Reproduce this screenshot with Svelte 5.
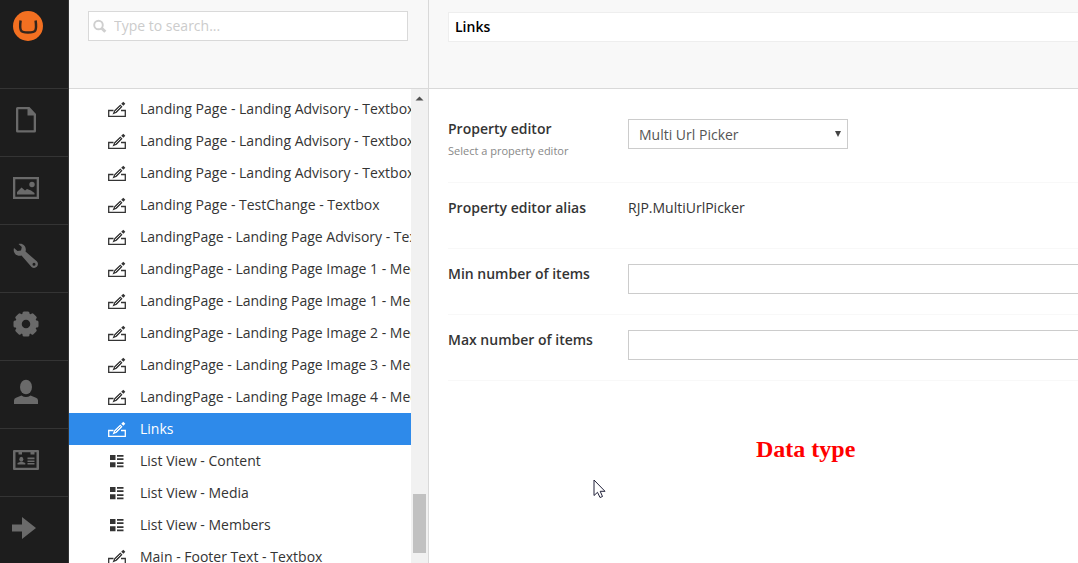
<script>
  let search = $state("");
  let name = $state("Links");
  let editor = $state("Multi Url Picker");
  let minItems = $state("");
  let maxItems = $state("");
  let selected = $state(10);

  const sections = [
    { label: "Content", icon: "document" },
    { label: "Media", icon: "picture" },
    { label: "Settings", icon: "wrench" },
    { label: "Developer", icon: "gear" },
    { label: "Users", icon: "user" },
    { label: "Members", icon: "card" },
    { label: "Help", icon: "arrow" },
  ];

  const dataTypes = [
    { name: "Landing Page - Landing Advisory - Textbox", icon: "edit" },
    { name: "Landing Page - Landing Advisory - Textbox", icon: "edit" },
    { name: "Landing Page - Landing Advisory - Textbox", icon: "edit" },
    { name: "Landing Page - TestChange - Textbox", icon: "edit" },
    { name: "LandingPage - Landing Page Advisory - Textbox", icon: "edit" },
    { name: "LandingPage - Landing Page Image 1 - Media", icon: "edit" },
    { name: "LandingPage - Landing Page Image 1 - Media", icon: "edit" },
    { name: "LandingPage - Landing Page Image 2 - Media", icon: "edit" },
    { name: "LandingPage - Landing Page Image 3 - Media", icon: "edit" },
    { name: "LandingPage - Landing Page Image 4 - Media", icon: "edit" },
    { name: "Links", icon: "edit" },
    { name: "List View - Content", icon: "list" },
    { name: "List View - Media", icon: "list" },
    { name: "List View - Members", icon: "list" },
    { name: "Main - Footer Text - Textbox", icon: "edit" },
  ];
</script>

<div class="shell">
  <nav class="sections" aria-label="Sections">
    <a class="brand" href="#/" aria-label="Home">
      <svg width="30" height="30" viewBox="0 0 30 30">
        <circle cx="15" cy="15" r="15" fill="#f37021" />
        <path
          d="M7.600 9.500 C7 14 7.200 18 8 19.500 C9 21.300 12 21.500 15 21.500 C18 21.500 21.300 21.300 22.300 19.500 C23.100 18 23.200 14 22.600 9.500"
          fill="none"
          stroke="#33251c"
          stroke-width="2.500"
        />
      </svg>
    </a>
    {#each sections as section}
      <a class="section" href="#/{section.icon}" aria-label={section.label}>
        <svg width="28" height="28" viewBox="0 0 28 28" fill="currentColor">
          {#if section.icon === "document"}
            <path
              fill-rule="evenodd"
              d="M5.500 1 H17.500 L24 8 V25 Q24 26.500 22.500 26.500 H5.500 Q4 26.500 4 25 V2.500 Q4 1 5.500 1 Z M6.300 3.300 V24.200 H21.700 V9.500 H15.500 V3.300 Z"
            />
          {:else if section.icon === "picture"}
            <path
              fill-rule="evenodd"
              d="M1 3 H27 V25 H1 Z M3.300 5.300 V22.700 H24.700 V5.300 Z"
            />
            <circle cx="20" cy="10.500" r="2.700" />
            <path d="M5 20.500 V18 L9.500 13.500 L13 16.500 L15 15 L19 16.500 L22.500 19 V20.500 Z" />
          {:else if section.icon === "wrench"}
            <path
              fill-rule="evenodd"
              d="M6.500 2 C11 0.500 15 5 13.500 9.500 L25 19.500 C28 23 23.500 28 19.500 25 L9.500 13.500 C5 15 0.500 11 2 6 L5.500 9 L9 8.500 L9.800 5 Z M22 20.700 A1.500 1.500 0 1 0 22 23.700 A1.500 1.500 0 1 0 22 20.700 Z"
            />
          {:else if section.icon === "gear"}
            <circle cx="14" cy="14" r="7.500" fill="none" stroke="currentColor" stroke-width="6.500" />
            {#each [0, 45, 90, 135] as angle}
              <rect x="10.500" y="1.500" width="7" height="4" rx="1.500" transform="rotate({angle} 14 14)" />
              <rect x="10.500" y="22.500" width="7" height="4" rx="1.500" transform="rotate({angle} 14 14)" />
            {/each}
          {:else if section.icon === "user"}
            <ellipse cx="14" cy="9" rx="6" ry="7.300" />
            <path d="M2 26 V22.500 Q2 20.500 4 19.700 L9.500 17.500 Q14 20.500 18.500 17.500 L24 19.700 Q26 20.500 26 22.500 V26 Z" />
          {:else if section.icon === "card"}
            <path
              fill-rule="evenodd"
              d="M2 4 H26 Q27 4 27 5 V23 Q27 24 26 24 H2 Q1 24 1 23 V5 Q1 4 2 4 Z M3.500 6.300 V21.700 H24.500 V6.300 H22.500 V8.500 H18.500 V6.300 H10 V8.500 H6.500 V6.300 Z"
            />
            <ellipse cx="9.300" cy="13.200" rx="2" ry="2.500" />
            <path d="M5.500 18.500 V17 L8 16 H10.800 L13.300 17 V18.500 Z M15.500 11.500 H22.500 V13.200 H15.500 Z M15.500 14.500 H22.500 V16 H15.500 Z M15.500 17 H22.500 V18.500 H15.500 Z" />
          {:else}
            <path d="M0 10.500 H10 V3 L24 14 L10 25 V17.500 H0 Z" />
          {/if}
        </svg>
      </a>
    {/each}
  </nav>

  <aside class="tree-panel">
    <div class="panel-header">
      <label class="search">
        <svg width="14" height="14" viewBox="0 0 14 14" fill="none" stroke="#cfcfcf">
          <circle cx="5.500" cy="6" r="4.300" stroke-width="1.900" />
          <path d="M8.500 9 L12.300 12.800" stroke-width="3" />
        </svg>
        <input type="text" placeholder="Type to search..." aria-label="Search" bind:value={search} />
      </label>
    </div>
    <div class="tree-body">
      <ul class="tree">
        {#each dataTypes as item, i}
          <li>
            <a href="#/datatype/{i}" class:selected={selected === i} onclick={() => (selected = i)}>
              <svg width="18" height="18" viewBox="0 0 18 18">
                {#if item.icon === "edit"}
                  <path
                    d="M5.500 10.500 H0.700 V16.300 H17.300 V10.500 H13"
                    fill="none"
                    stroke="currentColor"
                    stroke-width="1.300"
                  />
                  <path
                    d="M4.500 14.500 L6.300 10.300 L12.300 4.500 L14.500 6.700 L8.700 12.700 Z M13.200 3.700 L15.300 1.800 L17.300 3.800 L15.400 5.800 Z"
                    fill="currentColor"
                  />
                  <path class="nib" d="M7 11.900 L12.600 6.400" fill="none" stroke-width="0.900" />
                {:else}
                  <path
                    d="M2 3 H7.500 V8 H2 Z M9 3 H15.500 V4.800 H9 Z M9 6.200 H15.500 V8 H9 Z M2 10.300 H7.500 V15.300 H2 Z M9 10.300 H15.500 V12.100 H9 Z M9 13.500 H15.500 V15.300 H9 Z"
                    fill="currentColor"
                  />
                {/if}
              </svg>
              <span>{item.name}</span>
            </a>
          </li>
        {/each}
      </ul>
      <div class="scrollbar" aria-hidden="true">
        <svg width="9" height="5" viewBox="0 0 9 5">
          <path d="M0.500 4.500 L4.500 0.500 L8.500 4.500 Z" fill="#505050" />
        </svg>
        <div class="thumb"></div>
      </div>
    </div>
  </aside>

  <main class="editor">
    <div class="panel-header">
      <input class="name" type="text" aria-label="Name" bind:value={name} />
    </div>

    <form class="properties">
      <div class="property">
        <div class="caption">
          <label for="editor">Property editor</label>
          <small>Select a property editor</small>
        </div>
        <div class="select">
          <select id="editor" bind:value={editor}>
            <option>Multi Url Picker</option>
          </select>
          <svg width="6" height="6" viewBox="0 0 6 6">
            <path d="M0 0 H6 L3 6 Z" fill="#444444" />
          </svg>
        </div>
      </div>
      <div class="property">
        <div class="caption">
          <span>Property editor alias</span>
        </div>
        <div class="value">RJP.MultiUrlPicker</div>
      </div>
      <div class="property">
        <div class="caption">
          <label for="min">Min number of items</label>
        </div>
        <input id="min" type="text" bind:value={minItems} />
      </div>
      <div class="property">
        <div class="caption">
          <label for="max">Max number of items</label>
        </div>
        <input id="max" type="text" bind:value={maxItems} />
      </div>
    </form>

    <p class="note">Data type</p>
  </main>

  <svg class="cursor" width="13" height="20" viewBox="0 0 13 20" aria-hidden="true">
    <path
      d="M1 1 V16.500 L4.500 13.300 L7 18.500 L9.500 17.500 L7.200 12.300 H12 Z"
      fill="#ffffff"
      stroke="#22223a"
      stroke-width="1"
    />
  </svg>
</div>

<style>
  :global(body) {
    margin: 0;
    font-family: "Open Sans", "Helvetica Neue", Arial, sans-serif;
    font-size: 14px;
    line-height: 20px;
    color: #343434;
    background: #ffffff;
  }

  .shell {
    position: relative;
    display: flex;
    height: 100vh;
    overflow: hidden;
  }

  .shell svg {
    display: block;
    flex: none;
  }

  input,
  select {
    box-sizing: border-box;
    height: 30px;
    margin: 0;
    border: 1px solid #cccccc;
    border-radius: 0;
    font: inherit;
    color: #555555;
    background: #ffffff;
    outline: none;
  }

  .sections {
    flex: none;
    width: 68px;
    border-right: 1px solid #343434;
    background: #1d1d1d;
  }

  .brand {
    display: block;
    height: 77px;
    padding: 11px 13px 0;
    border-bottom: 1px solid #343434;
  }

  .section {
    display: flex;
    align-items: center;
    height: 61px;
    padding: 0 12px 6px;
    border-bottom: 1px solid #343434;
    color: #6a6a6a;
  }

  .section:last-child {
    border-bottom: none;
  }

  .section:hover {
    color: #d9d9d9;
  }

  .tree-panel {
    display: flex;
    flex-direction: column;
    flex: none;
    width: 359px;
    border-right: 1px solid #d9d9d9;
  }

  .panel-header {
    flex: none;
    box-sizing: border-box;
    height: 89px;
    padding: 11px 20px 0 19px;
    border-bottom: 1px solid #d9d9d9;
    background: #f8f8f8;
  }

  .search {
    display: flex;
    align-items: center;
    height: 28px;
    padding-left: 4px;
    border: 1px solid #d9d9d9;
    background: #ffffff;
  }

  .search input {
    flex: 1;
    min-width: 0;
    height: 28px;
    padding: 0 7px 2px;
    border: none;
  }

  .search input::placeholder {
    color: #cccccc;
    opacity: 1;
  }

  .tree-body {
    display: flex;
    flex: 1;
    min-height: 0;
  }

  .tree {
    flex: 1;
    min-width: 0;
    margin: 0;
    padding: 4px 0 0;
    overflow: hidden;
    list-style: none;
  }

  .tree a {
    display: flex;
    align-items: center;
    gap: 14px;
    height: 32px;
    padding-left: 39px;
    color: #343434;
    text-decoration: none;
    white-space: nowrap;
  }

  .tree a:hover {
    background: #f8f8f8;
  }

  .tree a.selected {
    color: #ffffff;
    background: #2e8aea;
  }

  .nib {
    stroke: #ffffff;
  }

  .selected .nib {
    stroke: #2e8aea;
  }

  .scrollbar {
    display: flex;
    flex-direction: column;
    align-items: center;
    justify-content: space-between;
    flex: none;
    box-sizing: border-box;
    width: 17px;
    padding: 7px 0 10px;
    background: #f1f1f1;
  }

  .thumb {
    width: 13px;
    height: 59px;
    background: #c1c1c1;
  }

  .editor {
    flex: 1;
    min-width: 0;
  }

  .editor .panel-header {
    padding: 12px 0 0 19px;
  }

  .name {
    width: 100%;
    padding: 0 6px 2px;
    border-color: #eeeeee;
    border-right: none;
    font-weight: 600;
    color: #000000;
  }

  .properties {
    padding: 15px 0 0 19px;
  }

  .property {
    display: grid;
    grid-template-columns: 180px 1fr;
    align-items: start;
    min-height: 30px;
    padding: 15px 0 20px;
    border-bottom: 1px solid #f8f8f8;
  }

  .caption {
    display: flex;
    flex-direction: column;
    font-weight: 600;
  }

  .caption small {
    padding: 2px 0 1px;
    font-size: 11px;
    font-weight: 400;
    color: #888888;
  }

  .property > input {
    width: 100%;
    padding: 0 6px;
    border-right: none;
  }

  .select {
    position: relative;
    width: 220px;
  }

  .select select {
    width: 100%;
    padding: 1px 10px 0;
    appearance: none;
  }

  .select svg {
    position: absolute;
    top: 12px;
    right: 7px;
    pointer-events: none;
  }

  .note {
    margin: 0;
    padding: 55px 0 0 327px;
    font-family: "Liberation Serif", "Times New Roman", serif;
    font-size: 24px;
    font-weight: 700;
    line-height: 26px;
    color: #ff0000;
  }

  .cursor {
    position: absolute;
    top: 479px;
    left: 593px;
  }
</style>
